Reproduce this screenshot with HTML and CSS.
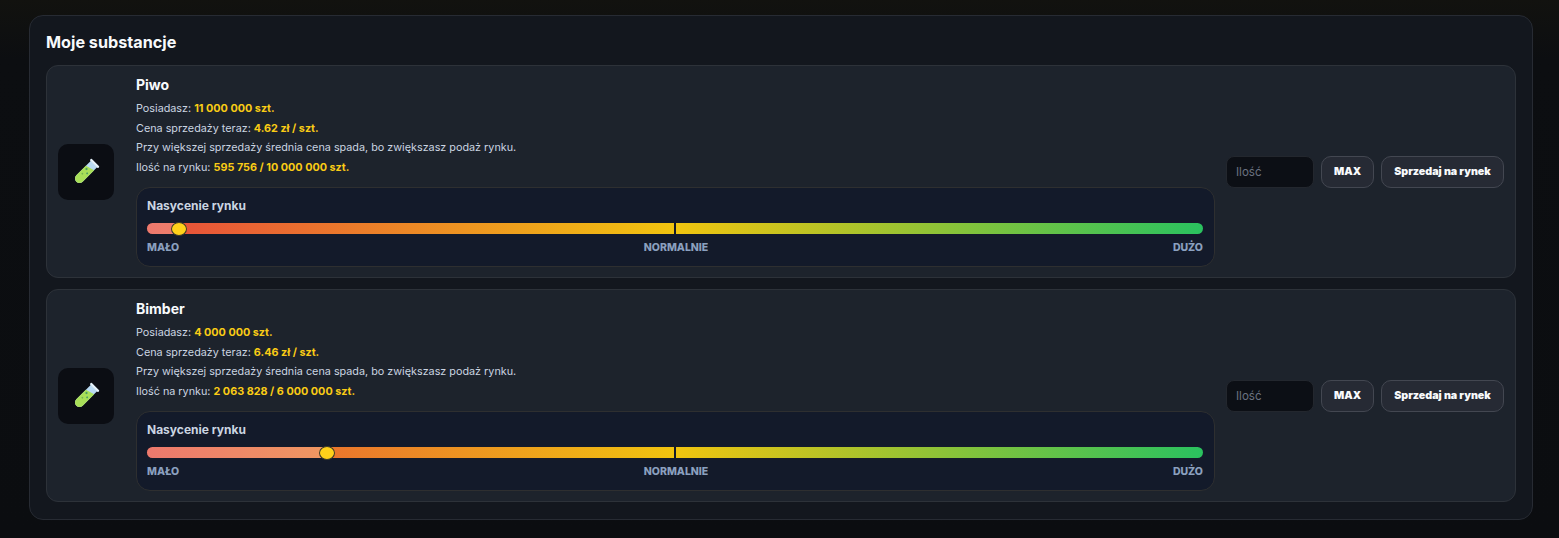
FILE: index.html
```html
<!DOCTYPE html>
<html lang="pl">
<head>
	<meta charset="UTF-8">
	<title>Moje substancje</title>
	<link rel="stylesheet" href="styles.css">
</head>
<body>
	<div class="panel">
		<h2 class="panel-title">Moje substancje</h2>
		<div class="list">
			<!-- Piwo -->
			<div class="card">
				<div class="icon-box">
					<svg class="tube" viewBox="0 0 30 30" width="27" height="27">
						<g transform="rotate(45 15 15)">
							<path d="M10 3 H20 V26 A5 5 0 0 1 10 26 Z" fill="#b9d9f2"/>
							<path d="M10 11 L20 8 V26 A5 5 0 0 1 10 26 Z" fill="#a9df58"/>
							<rect x="8.5" y="1" width="13" height="2.5" rx="1" fill="#e6f2fb"/>
							<circle cx="13" cy="13" r="1.3" fill="#4f9f63"/>
							<circle cx="17" cy="16" r="1.1" fill="#4f9f63"/>
							<circle cx="13.5" cy="20" r="1" fill="#74b553"/>
						</g>
					</svg>
				</div>
				<div class="info">
					<div class="name">Piwo</div>
					<p class="line">Posiadasz: <b>11 000 000 szt.</b></p>
					<p class="line">Cena sprzedaży teraz: <b>4.62 zł / szt.</b></p>
					<p class="line">Przy większej sprzedaży średnia cena spada, bo zwiększasz podaż rynku.</p>
					<p class="line">Ilość na rynku: <b>595 756 / 10 000 000 szt.</b></p>
					<div class="gauge">
						<div class="gauge-title">Nasycenie rynku</div>
						<div class="bar">
							<span class="bar-fade" style="width:3%"></span>
							<span class="bar-mid"></span>
							<span class="knob" style="left:3%"></span>
						</div>
						<div class="scale"><span>MAŁO</span><span>NORMALNIE</span><span>DUŻO</span></div>
					</div>
				</div>
				<div class="actions">
					<input class="qty" type="text" placeholder="Ilość">
					<button class="btn btn-max">MAX</button>
					<button class="btn btn-sell">Sprzedaj na rynek</button>
				</div>
			</div>
			<!-- Bimber -->
			<div class="card">
				<div class="icon-box">
					<svg class="tube" viewBox="0 0 30 30" width="27" height="27">
						<g transform="rotate(45 15 15)">
							<path d="M10 3 H20 V26 A5 5 0 0 1 10 26 Z" fill="#b9d9f2"/>
							<path d="M10 11 L20 8 V26 A5 5 0 0 1 10 26 Z" fill="#a9df58"/>
							<rect x="8.5" y="1" width="13" height="2.5" rx="1" fill="#e6f2fb"/>
							<circle cx="13" cy="13" r="1.3" fill="#4f9f63"/>
							<circle cx="17" cy="16" r="1.1" fill="#4f9f63"/>
							<circle cx="13.5" cy="20" r="1" fill="#74b553"/>
						</g>
					</svg>
				</div>
				<div class="info">
					<div class="name">Bimber</div>
					<p class="line">Posiadasz: <b>4 000 000 szt.</b></p>
					<p class="line">Cena sprzedaży teraz: <b>6.46 zł / szt.</b></p>
					<p class="line">Przy większej sprzedaży średnia cena spada, bo zwiększasz podaż rynku.</p>
					<p class="line">Ilość na rynku: <b>2 063 828 / 6 000 000 szt.</b></p>
					<div class="gauge">
						<div class="gauge-title">Nasycenie rynku</div>
						<div class="bar">
							<span class="bar-fade" style="width:17%"></span>
							<span class="bar-mid"></span>
							<span class="knob" style="left:17%"></span>
						</div>
						<div class="scale"><span>MAŁO</span><span>NORMALNIE</span><span>DUŻO</span></div>
					</div>
				</div>
				<div class="actions">
					<input class="qty" type="text" placeholder="Ilość">
					<button class="btn btn-max">MAX</button>
					<button class="btn btn-sell">Sprzedaj na rynek</button>
				</div>
			</div>
		</div>
	</div>
</body>
</html>
```

FILE: styles.css
```css
*{box-sizing:border-box;}
html,body{height:100%;}
body{margin:0;padding:15px 26px 19px 29px;background:linear-gradient(180deg,#12120f 0,#0c0e11 60px,#0b0d10 100%);font-family:"Inter","Noto Sans",sans-serif;color:#fff;overflow:hidden;}
.panel{background:#13171e;border:1px solid #272b33;border-radius:14px;padding:15px 16px 17px 16px;}
.panel-title{margin:0 0 12px 0;font-size:16.2px;line-height:22px;font-weight:700;color:#f8fafc;}
.list{display:flex;flex-direction:column;gap:11px;}
.card{display:flex;align-items:center;gap:22px;height:213px;padding:0 11px 1px 11px;background:#1d232c;border:1px solid #2d3239;border-radius:12px;}
.icon-box{flex:none;width:56px;height:56px;margin-top:1px;border-radius:10px;background:#0b0d13;display:flex;align-items:center;justify-content:center;}
.info{flex:1;min-width:0;}
.name{font-size:14px;line-height:20px;font-weight:700;color:#f8fafc;margin-bottom:4px;}
.line{margin:0;font-size:10.8px;line-height:19.5px;color:#cbd5e1;}
.line b{font-weight:700;color:#facc15;}
.gauge{margin-top:10px;height:80px;padding:10px 11px 10px 10px;background:#131a2a;border:1px solid #2e2f30;border-radius:14px;}
.gauge-title{font-size:12px;line-height:16px;font-weight:700;color:#cbd5e1;}
.bar{position:relative;height:11px;margin-top:9px;border-radius:6px;background:linear-gradient(90deg,#e74c3c 0,#f1c40f 50%,#2ac25f 100%);}
.bar-fade{display:block;height:100%;border-radius:6px 0 0 6px;background:rgba(255,255,255,.25);}
.bar-mid{position:absolute;left:50%;top:0;width:2px;height:100%;margin-left:-1px;background:#131a2a;}
.knob{position:absolute;top:-1.5px;width:16px;height:14px;margin-left:-8px;border-radius:50%;background:#ffd11a;border:1px solid #3a3a2a;}
.scale{display:flex;justify-content:space-between;margin-top:7px;font-size:10.5px;line-height:14px;font-weight:800;color:#8ba0bf;}
.actions{flex:none;display:flex;gap:7px;margin-left:-11px;margin-top:1px;}
.qty{width:88px;height:32px;padding:0 9px;background:#0c0f15;border:1px solid #23272e;border-radius:8px;color:#fff;font-family:inherit;font-size:11.6px;outline:none;}
.qty::placeholder{color:#6b7280;}
.btn{height:32px;padding:0;background:#262a34;border:1px solid #434751;border-radius:10px;color:#f8fafc;font-family:inherit;font-size:10.7px;font-weight:900;}
.btn-max{width:53px;}
.btn-sell{width:123px;}
```
